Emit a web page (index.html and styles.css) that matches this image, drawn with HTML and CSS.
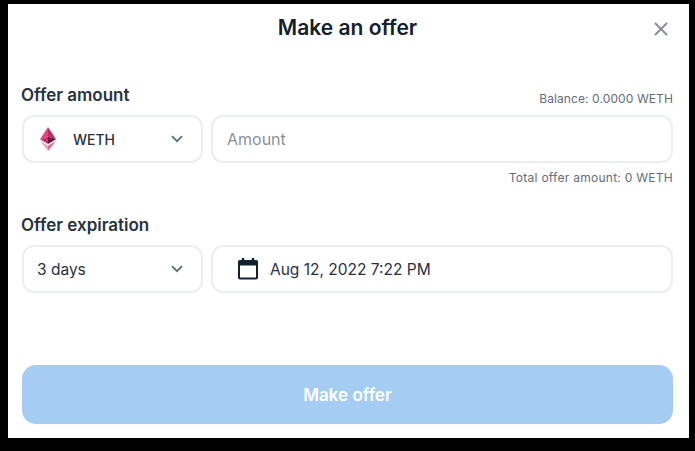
FILE: index.html
```html
<!DOCTYPE html>
<html lang="en">
<head>
<meta charset="utf-8">
<title>Make an offer</title>
<link rel="stylesheet" href="styles.css">
</head>
<body>
<main class="modal">
  <header class="modal-head">
    <h1 class="title">Make an offer</h1>
    <button class="close" aria-label="Close">
      <svg width="14" height="14" viewBox="0 0 14 14"><path d="M1 1l12 12M13 1L1 13" fill="none" stroke="#87909c" stroke-width="2"/></svg>
    </button>
  </header>
  <section class="amount">
    <div class="label-row">
      <h2 class="label">Offer amount</h2>
      <span class="note">Balance: 0.0000 WETH</span>
    </div>
    <div class="field-row">
      <div class="field select token">
        <svg class="eth" width="16" height="24" viewBox="0 0 16 24">
          <path d="M8 0L0 12.2 8 9.6z" fill="#e8457f"/>
          <path d="M8 0l8 12.2L8 9.6z" fill="#c22a63"/>
          <path d="M8 9.6L0 12.2 8 17z" fill="#c92f69"/>
          <path d="M8 9.6l8 2.6L8 17z" fill="#6e1238"/>
          <path d="M0 14l8 10v-5.4z" fill="#f3a5c3"/>
          <path d="M16 14L8 24v-5.4z" fill="#e56f9e"/>
        </svg>
        <span class="token-name">WETH</span>
        <svg class="chev" width="14" height="8" viewBox="0 0 14 8"><path d="M2 1.200L7 6.200 12 1.200" fill="none" stroke="#5f6d7c" stroke-width="1.800"/></svg>
      </div>
      <div class="field grow"><span class="placeholder">Amount</span></div>
    </div>
    <p class="total note">Total offer amount: 0 WETH</p>
  </section>
  <section class="expiry">
    <h2 class="label">Offer expiration</h2>
    <div class="field-row">
      <div class="field select days">
        <span class="value days-value">3 days</span>
        <svg class="chev" width="14" height="8" viewBox="0 0 14 8"><path d="M2 1.200L7 6.200 12 1.200" fill="none" stroke="#5f6d7c" stroke-width="1.800"/></svg>
      </div>
      <div class="field grow date">
        <svg width="20" height="22" viewBox="0 0 20 22"><path d="M5 0v3M15 0v3" stroke="#14202e" stroke-width="2.4" fill="none"/><path d="M0 3.500a1.500 1.500 0 0 1 1.500-1.500h17a1.500 1.500 0 0 1 1.500 1.500V19.500a2 2 0 0 1-2 2H2a2 2 0 0 1-2-2z" fill="#14202e"/><rect x="2" y="7.500" width="16" height="12" fill="#fff"/></svg>
        <span class="value">Aug 12, 2022 7:22 PM</span>
      </div>
    </div>
  </section>
  <button class="submit">Make offer</button>
</main>
</body>
</html>
```
FILE: styles.css
```css
* { box-sizing: border-box; }
html, body { margin: 0; height: 100%; }
body {
  background: #000;
  padding: 4px 6px 13px 8px;
  font-family: Inter, "Liberation Sans", sans-serif;
  color: #14202e;
}
.modal {
  background: #fff;
  height: 434px;
  padding: 0 16px 14px 14px;
  display: flex;
  flex-direction: column;
}
.modal-head {
  display: flex;
  align-items: center;
  justify-content: center;
  height: 47px;
  position: relative;
}
.title { margin: 0; font-size: 21px; font-weight: 600; line-height: 47px; }
.close {
  position: absolute;
  right: 5px;
  top: 18px;
  padding: 0;
  border: 0;
  background: none;
  display: flex;
}
.amount { margin-top: 32px; }
.label-row { display: flex; justify-content: space-between; align-items: flex-end; }
.label { margin: 0 0 0 -1px; font-size: 17px; font-weight: 600; line-height: 24px; color: #27323f; }
.note { font-size: 12px; line-height: 16px; color: #5f6d7c; letter-spacing: 0.1px; }
.total { letter-spacing: 0.27px; }
.field-row { display: flex; gap: 8px; margin-top: 8px; }
.field {
  height: 48px;
  border: 2px solid #eaedf1;
  border-radius: 12px;
  display: flex;
  align-items: center;
  font-size: 15.500px;
  background: #fff;
}
.select { width: 181px; flex: none; justify-content: space-between; }
.token { padding: 0 17px 0 16px; }
.token-name { margin-left: 17px; margin-right: auto; font-size: 14px; font-weight: 500; color: #27323f; }
.days { padding: 0 17px 0 13px; }
.grow { flex: 1; }
.placeholder { margin-left: 14px; font-size: 16px; color: #87909c; }
.date { padding-left: 25px; gap: 12px; }
.value { color: #27323f; }
.total { margin: 7px 0 0; text-align: right; }
.expiry { margin-top: 27px; }
.expiry .field-row { margin-top: 8px; }
.submit {
  margin-top: auto;
  height: 59px;
  border: 0;
  border-radius: 14px;
  background: #a5cdf4;
  color: #fff;
  font: 600 17px Inter, "Liberation Sans", sans-serif;
}
```
